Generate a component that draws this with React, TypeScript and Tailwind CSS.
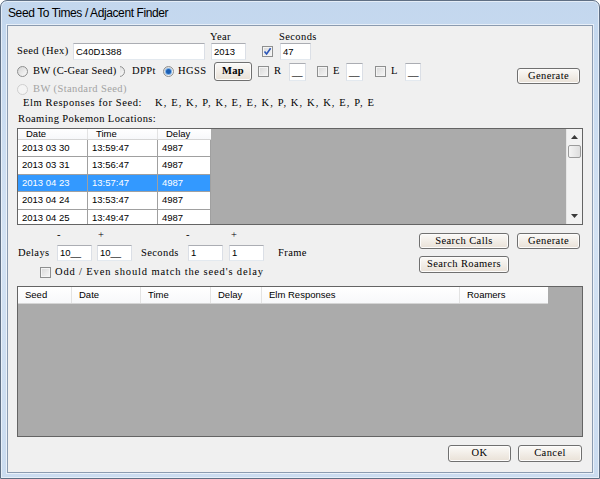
const mono = "font-['Liberation_Serif',serif] text-[10.5px] tracking-[0.4px] leading-none text-black whitespace-nowrap";
const sans = "font-['Liberation_Sans',Arial,sans-serif] text-[9.5px] leading-none whitespace-nowrap";

type Box = { w: string; h: string; value?: string };

function TextBox({ w, h, value }: Box) {
  return (
    <div
      className={`${w} ${h} ${sans} flex items-center bg-white border border-[#abadb3] border-x-[#dbdfe6] border-b-[#e3e9ef] px-[2px] text-black tracking-normal`}
    >
      {value}
    </div>
  );
}

function Btn({ w, h, label, bold }: { w: string; h: string; label: string; bold?: boolean }) {
  return (
    <div
      className={`${w} ${h} ${mono} ${bold ? "font-bold" : ""} flex items-center justify-center rounded-[3px] border border-[#707070] bg-gradient-to-b from-[#fbfaf8] to-[#e9e1d7] shadow-[inset_0_0_0_1px_#fdfcfb]`}
    >
      {label}
    </div>
  );
}

function Check({ checked }: { checked?: boolean }) {
  return (
    <div className="w-[11px] h-[11px] shrink-0 border border-[#8e8f8f] bg-gradient-to-br from-[#d8d8d8] to-[#f7f7f7] shadow-[inset_0_0_0_1px_#f4f4f4] flex items-center justify-center">
      {checked && (
        <svg width="9" height="9" viewBox="0 0 9 9">
          <path d="M1.5 4.5 L3.6 7 L7.6 1.2" fill="none" stroke="#2a55b8" strokeWidth="1.6" />
        </svg>
      )}
    </div>
  );
}

function Radio({ on, disabled }: { on?: boolean; disabled?: boolean }) {
  return (
    <div
      className={`w-[11px] h-[11px] shrink-0 rounded-full border flex items-center justify-center ${
        disabled
          ? "border-[#cfcfcf] bg-[#f4f4f4]"
          : "border-[#8e8f8f] bg-gradient-to-br from-[#d4d4d4] to-[#fbfbfb]"
      }`}
    >
      {on && <div className="w-[5px] h-[5px] rounded-full bg-[#1b5fb4] shadow-[0_0_0_1px_#7fb2e8]" />}
    </div>
  );
}

const roam = [
  ["2013 03 30", "13:59:47", "4987"],
  ["2013 03 31", "13:56:47", "4987"],
  ["2013 04 23", "13:57:47", "4987"],
  ["2013 04 24", "13:53:47", "4987"],
  ["2013 04 25", "13:49:47", "4987"],
];
const rowH = ["h-[17px]", "h-[18px]", "h-[17px]", "h-[18px]", "h-[17px]"];

const resultCols = [
  { name: "Seed", w: "w-[54px]" },
  { name: "Date", w: "w-[69px]" },
  { name: "Time", w: "w-[70px]" },
  { name: "Delay", w: "w-[51px]" },
  { name: "Elm Responses", w: "w-[198px]" },
  { name: "Roamers", w: "w-[88px]" },
];

export default function App() {
  return (
    <div className="w-[600px] h-[479px] bg-white">
      <div className="w-full h-full flex flex-col rounded-t-[7px] border border-[#5f6f84] bg-gradient-to-b from-[#c3d7ee] via-[#d3e2f3] to-[#cbdcf0] shadow-[inset_0_0_0_1px_rgba(255,255,255,0.55)] px-[6px] pb-[5px]">
        {/* title bar */}
        <div className="h-[24px] shrink-0 flex items-center pl-[1px] font-['Liberation_Sans',Arial,sans-serif] text-[12px] tracking-[-0.4px] text-black">
          Seed To Times / Adjacent Finder
        </div>

        {/* client area */}
        <div className="flex-1 flex flex-col border border-[#8b9bb0] bg-[#f0f0f0] shadow-[0_0_0_1px_rgba(255,255,255,0.6)]">
          {/* Year / Seconds labels */}
          <div className={`mt-[5px] h-[12px] flex items-center pl-[202px] ${mono}`}>
            <span className="w-[69px]">Year</span>
            <span>Seconds</span>
          </div>

          {/* seed row */}
          <div className={`h-[17px] flex items-center pl-[9px] ${mono}`}>
            <span className="w-[56px]">Seed (Hex)</span>
            <TextBox w="w-[132px]" h="h-[17px]" value="C40D1388" />
            <div className="ml-[6px]">
              <TextBox w="w-[35px]" h="h-[17px]" value="2013" />
            </div>
            <div className="ml-[16px]">
              <Check checked />
            </div>
            <div className="ml-[7px]">
              <TextBox w="w-[31px]" h="h-[17px]" value="47" />
            </div>
          </div>

          {/* game row */}
          <div className={`mt-[2px] h-[19px] flex items-center pl-[9px] ${mono}`}>
            <Radio />
            <span className="ml-[5px] w-[83px] tracking-[0.2px]">BW (C-Gear Seed)</span>
            <div className="ml-[4px] w-[5px] h-[11px] overflow-hidden">
              <div className="-ml-[6px]">
                <Radio />
              </div>
            </div>
            <span className="ml-[7px] w-[21px]">DPPt</span>
            <div className="ml-[10px]">
              <Radio on />
            </div>
            <span className="ml-[4px] w-[21px]">HGSS</span>
            <div className="ml-[15px]">
              <Btn w="w-[38px]" h="h-[19px]" label="Map" bold />
            </div>
            <div className="ml-[6px]">
              <Check />
            </div>
            <span className="ml-[5px] w-[5px]">R</span>
            <div className="ml-[10px]">
              <TextBox w="w-[17px]" h="h-[18px]" value="__" />
            </div>
            <div className="ml-[11px]">
              <Check />
            </div>
            <span className="ml-[5px] w-[5px]">E</span>
            <div className="ml-[8px]">
              <TextBox w="w-[17px]" h="h-[18px]" value="__" />
            </div>
            <div className="ml-[12px]">
              <Check />
            </div>
            <span className="ml-[5px] w-[5px]">L</span>
            <div className="ml-[9px]">
              <TextBox w="w-[16px]" h="h-[18px]" value="__" />
            </div>
            <div className="ml-auto mr-[12px] self-start mt-[6px]">
              <Btn w="w-[63px]" h="h-[16px]" label="Generate" />
            </div>
          </div>

          {/* BW standard */}
          <div className={`mt-[2px] h-[12px] flex items-center pl-[9px] ${mono}`}>
            <Radio disabled />
            <span className="ml-[5px] text-[#a3a3a3]">BW (Standard Seed)</span>
          </div>

          {/* Elm responses */}
          <div className={`mt-[2px] h-[12px] flex items-center pl-[15px] ${mono}`}>
            <span className="w-[132px] tracking-[0.6px]">Elm Responses for Seed:</span>
            <span className="tracking-[1.1px]">K, E, K, P, K, E, E, K, P, K, K, K, E, P, E</span>
          </div>

          <div className={`mt-[4px] h-[12px] flex items-center pl-[10px] ${mono}`}>
            Roaming Pokemon Locations:
          </div>

          {/* roaming grid */}
          <div className="mt-[3px] ml-[9px] w-[566px] h-[97px] flex border border-[#646464] bg-[#ababab] overflow-hidden">
            <div className="w-[193px] flex flex-col">
              <div className={`h-[18px] flex bg-gradient-to-b from-white to-[#f7f8fa] border-b border-[#d5d5d5] text-black ${sans}`}>
                <div className="w-[70px] flex items-center pl-[8px] border-r border-[#e3e3e3]">Date</div>
                <div className="w-[70px] flex items-center pl-[8px] border-r border-[#e3e3e3]">Time</div>
                <div className="w-[53px] flex items-center pl-[8px]">Delay</div>
              </div>
              {roam.map((r, i) => (
                <div
                  key={i}
                  className={`${rowH[i]} shrink-0 flex ${sans} ${i === 2 ? "bg-[#3399ff] text-white" : "bg-white text-black"}`}
                >
                  <div className="w-[70px] flex items-center pl-[4px] border-r border-b border-[#a0a0a0]">{r[0]}</div>
                  <div className="w-[70px] flex items-center pl-[4px] border-r border-b border-[#a0a0a0]">{r[1]}</div>
                  <div className="w-[53px] flex items-center pl-[4px] border-r border-b border-[#a0a0a0]">{r[2]}</div>
                </div>
              ))}
            </div>
            <div className="flex-1" />
            <div className="w-[16px] flex flex-col items-center bg-[#f2f2f2] border-l border-[#e6e6e6]">
              <div className="h-[16px] flex items-center justify-center">
                <svg width="7" height="4" viewBox="0 0 7 4">
                  <path d="M0 4 L3.5 0 L7 4 Z" fill="#3a3a3a" />
                </svg>
              </div>
              <div className="w-[13px] h-[13px] rounded-[2px] border border-[#9b9b9b] bg-gradient-to-r from-[#f4f4f4] to-[#dedede]" />
              <div className="flex-1" />
              <div className="h-[16px] flex items-center justify-center">
                <svg width="7" height="4" viewBox="0 0 7 4">
                  <path d="M0 0 L3.5 4 L7 0 Z" fill="#3a3a3a" />
                </svg>
              </div>
            </div>
          </div>

          {/* delays section */}
          <div className="h-[61px] flex">
            <div className="flex flex-col">
              <div className={`mt-[5px] h-[10px] flex items-center pl-[49px] ${mono}`}>
                <span className="w-[41px]">-</span>
                <span className="w-[88px]">+</span>
                <span className="w-[45px]">-</span>
                <span>+</span>
              </div>
              <div className={`mt-[5px] h-[16px] flex items-center pl-[10px] ${mono}`}>
                <span className="w-[39px]">Delays</span>
                <TextBox w="w-[35px]" h="h-[16px]" value="10__" />
                <div className="ml-[5px]">
                  <TextBox w="w-[35px]" h="h-[16px]" value="10__" />
                </div>
                <span className="ml-[9px] w-[47px]">Seconds</span>
                <TextBox w="w-[35px]" h="h-[16px]" value="1" />
                <div className="ml-[6px]">
                  <TextBox w="w-[35px]" h="h-[16px]" value="1" />
                </div>
                <span className="ml-[14px]">Frame</span>
              </div>
              <div className={`mt-[5px] h-[12px] flex items-center pl-[32px] ${mono}`}>
                <Check />
                <span className="ml-[4px] tracking-[0.85px]">Odd / Even should match the seed's delay</span>
              </div>
            </div>
            <div className="ml-auto mr-[12px] flex flex-col">
              <div className="mt-[8px] flex gap-[8px]">
                <Btn w="w-[90px]" h="h-[16px]" label="Search Calls" />
                <Btn w="w-[63px]" h="h-[16px]" label="Generate" />
              </div>
              <div className="mt-[7px]">
                <Btn w="w-[90px]" h="h-[17px]" label="Search Roamers" />
              </div>
            </div>
          </div>

          {/* results grid */}
          <div className="ml-[9px] w-[566px] h-[151px] border border-[#646464] bg-[#ababab]">
            <div className={`w-[530px] h-[17px] flex bg-gradient-to-b from-white to-[#f7f8fa] border-b border-[#d5d5d5] text-black ${sans}`}>
              {resultCols.map((c, i) => (
                <div
                  key={c.name}
                  className={`${c.w} flex items-center pl-[7px] ${i < resultCols.length - 1 ? "border-r border-[#e3e3e3]" : ""}`}
                >
                  {c.name}
                </div>
              ))}
            </div>
          </div>

          {/* dialog buttons */}
          <div className="mt-[8px] flex justify-end gap-[7px] pr-[10px]">
            <Btn w="w-[63px]" h="h-[17px]" label="OK" />
            <Btn w="w-[64px]" h="h-[17px]" label="Cancel" />
          </div>
        </div>
      </div>
    </div>
  );
}
